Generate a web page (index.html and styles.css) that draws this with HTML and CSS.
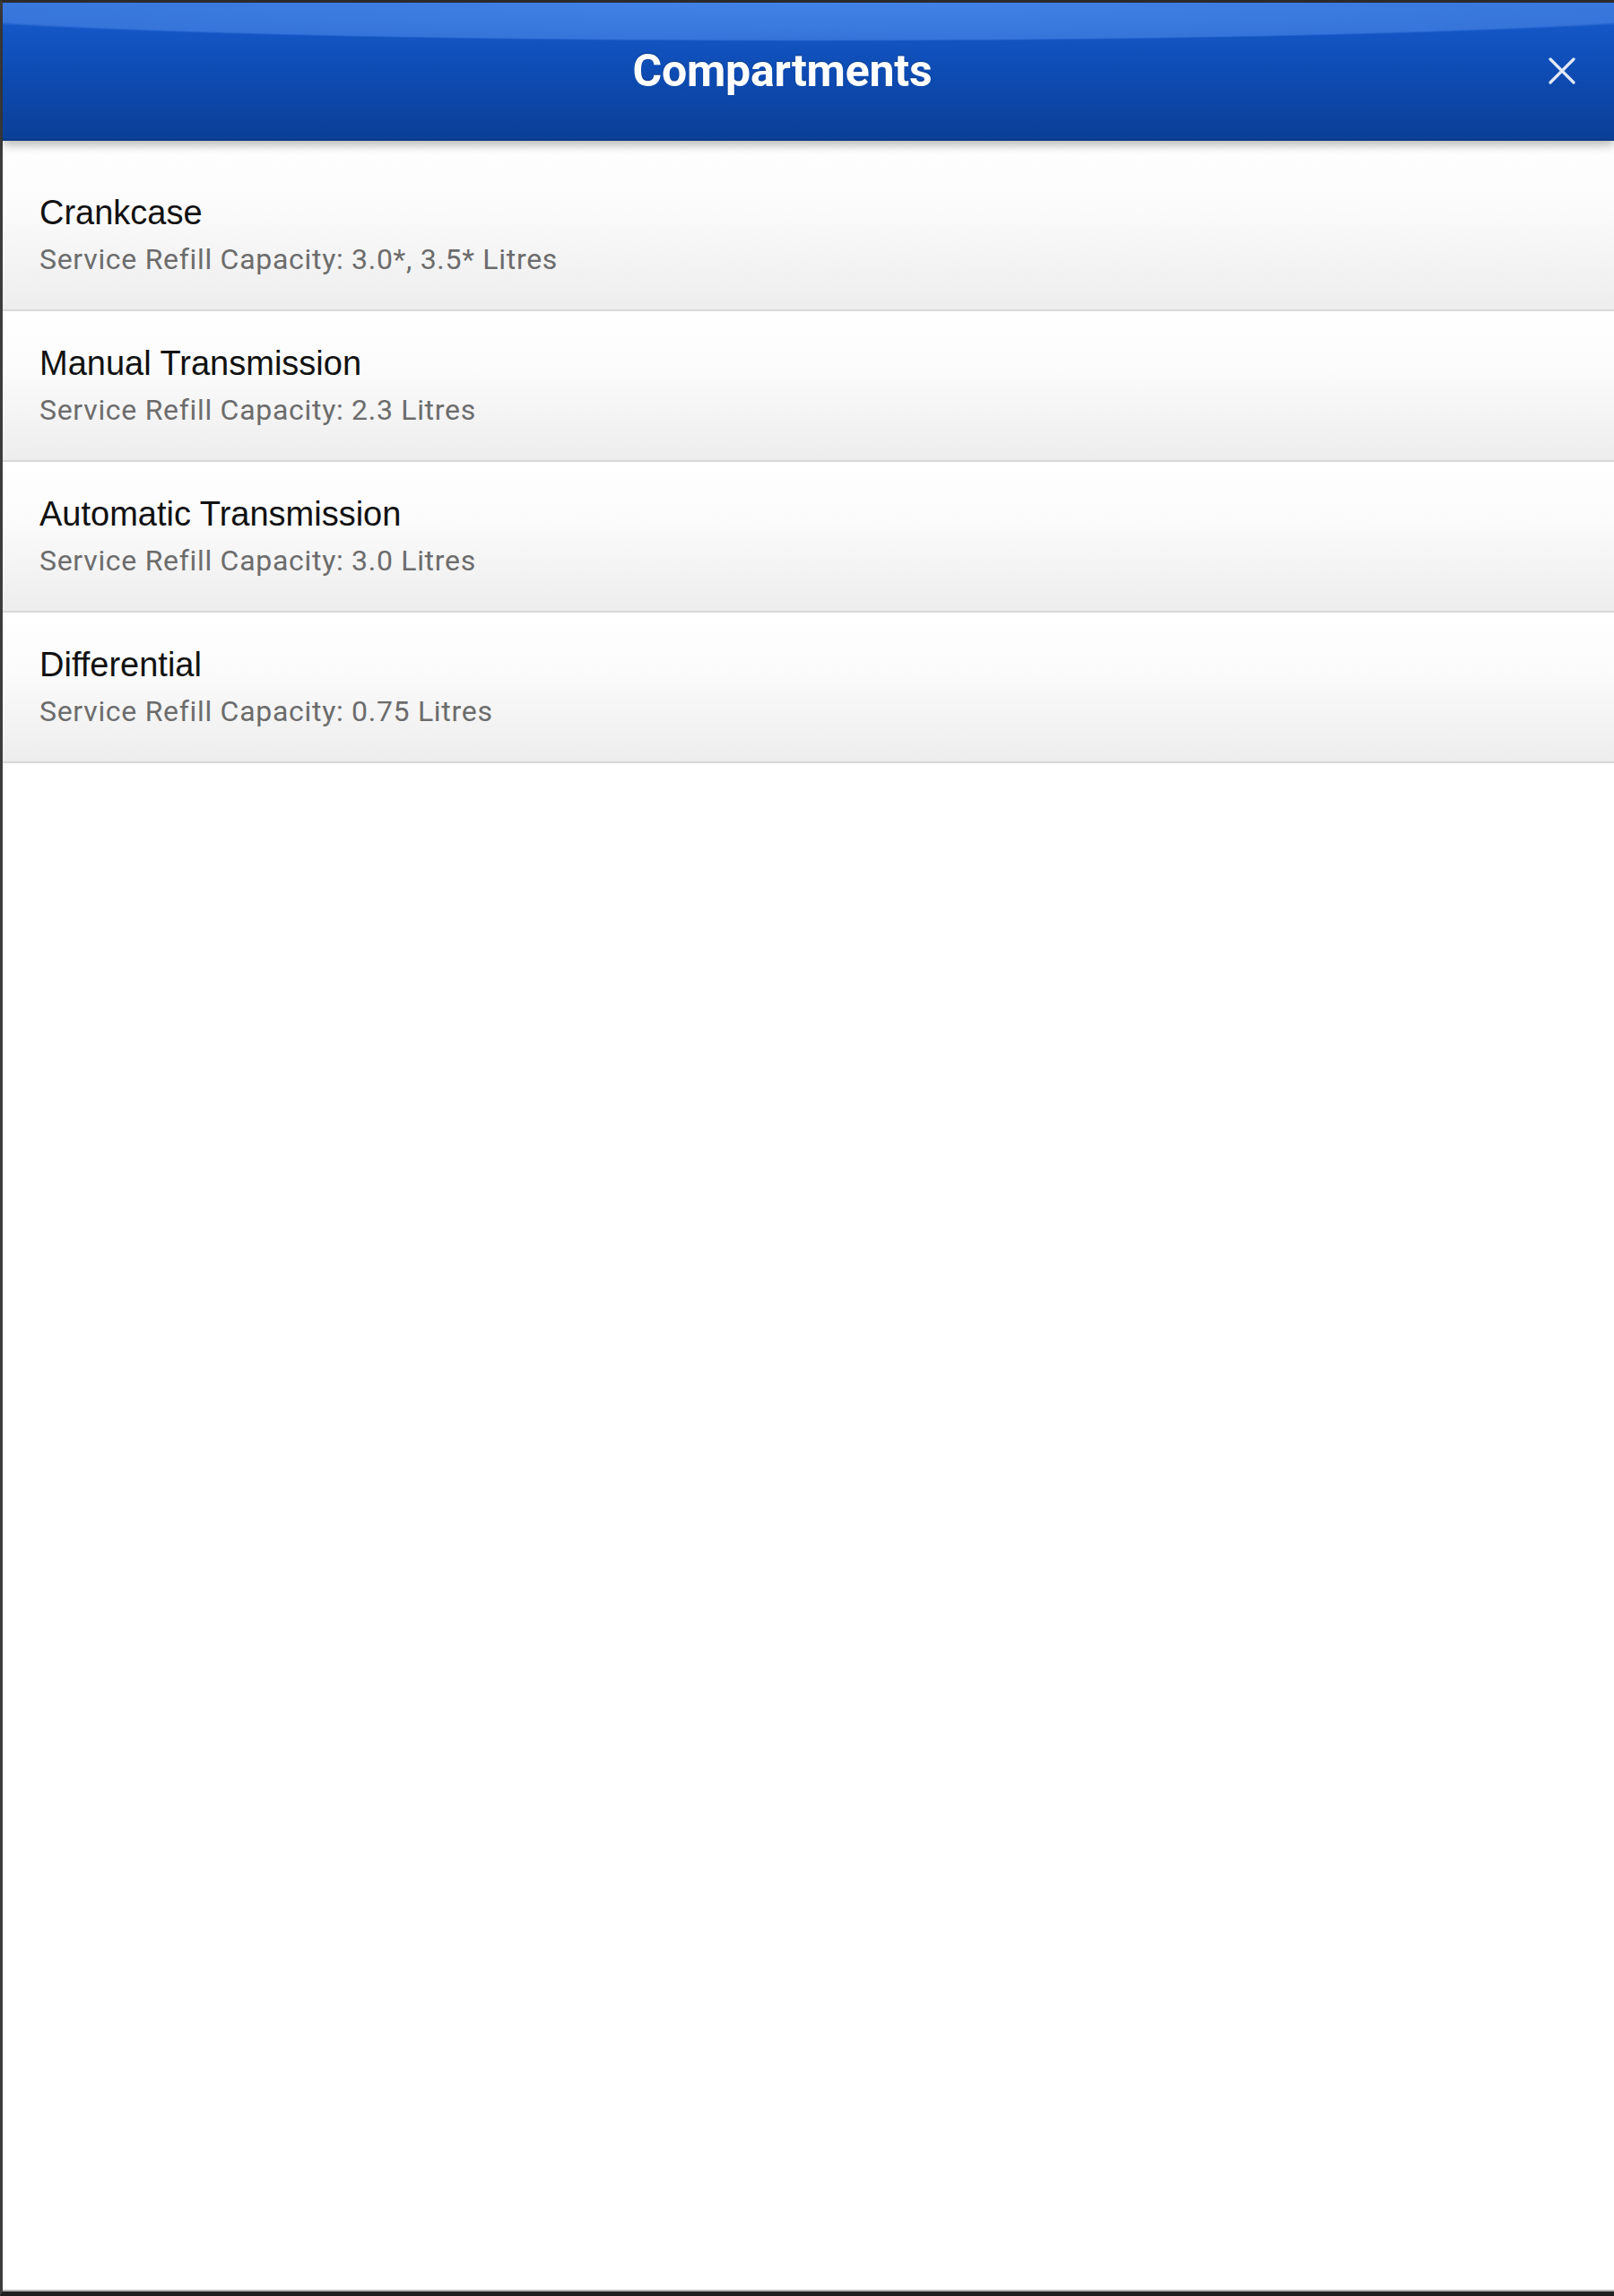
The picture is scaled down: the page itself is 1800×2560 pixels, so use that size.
FILE: index.html
```html
<!DOCTYPE html>
<html lang="en">
  <head>
    <meta charset="UTF-8" />
    <meta name="viewport" content="width=device-width, initial-scale=1.0" />
    <title>Compartments</title>
    <link rel="stylesheet" href="styles.css">
  </head>
  <body>
    <div class="dialog">
      <header class="dialog-header">
        <h1 class="dialog-title">Compartments</h1>
        <button class="close-btn" type="button" aria-label="Close">
          <svg width="30" height="30" viewBox="0 0 30 30">
            <path d="M2 2 L28 28 M28 2 L2 28" stroke="#fff" stroke-width="3.2" stroke-linecap="round" />
          </svg>
        </button>
      </header>

      <ul class="compartment-list">
        <li class="compartment">
          <div class="compartment-name">Crankcase</div>
          <div class="compartment-capacity">Service Refill Capacity: 3.0*, 3.5* Litres</div>
        </li>
        <li class="compartment">
          <div class="compartment-name">Manual Transmission</div>
          <div class="compartment-capacity">Service Refill Capacity: 2.3 Litres</div>
        </li>
        <li class="compartment">
          <div class="compartment-name">Automatic Transmission</div>
          <div class="compartment-capacity">Service Refill Capacity: 3.0 Litres</div>
        </li>
        <li class="compartment">
          <div class="compartment-name">Differential</div>
          <div class="compartment-capacity">Service Refill Capacity: 0.75 Litres</div>
        </li>
      </ul>
    </div>
  </body>
</html>
```

FILE: styles.css
```css
/* General Styles */
body {
  margin: 0;
  padding: 0;
  background: #222;
  font-family: "Liberation Sans", Arial, sans-serif;
}

.dialog {
  height: 2560px;
  box-sizing: border-box;
  background: #fff;
  border-top: 3px solid #2c2c2c;
  border-left: 3px solid #3c3c3c;
  border-bottom: 5px solid #1e1e1e;
  box-shadow: inset 0 -2px 0 #b5b5b5;
}

/* Header */
.dialog-header {
  position: relative;
  z-index: 1;
  display: flex;
  align-items: center;
  height: 152px;
  padding: 0 36px 0 30px;
  border-bottom: 2px solid #0a3884;
  background:
    radial-gradient(ellipse 1100px 43px at 50% 0, #4282e6 0, #3674da 96%, rgba(54, 116, 218, 0) 100%),
    linear-gradient(#175ccf, #0e4cb4 50%, #0b3f97);
  box-shadow: 0 5px 10px rgba(0, 0, 0, 0.28);
}

.dialog-title {
  flex: 1;
  margin: 0;
  text-align: center;
  color: #fff;
  font-family: Roboto, "Liberation Sans", sans-serif;
  font-weight: bold;
  font-size: 50px;
  letter-spacing: -0.2px;
  text-shadow: 0 -1px 1px rgba(0, 0, 0, 0.25);
}

.close-btn {
  width: 60px;
  height: 60px;
  margin-right: -8px;
  padding: 0;
  border: none;
  background: none;
  display: flex;
  align-items: center;
  justify-content: center;
  opacity: 0.88;
  cursor: pointer;
}

/* List */
.compartment-list {
  list-style: none;
  margin: 0;
  padding: 0;
}

.compartment {
  padding: 36px 41px 38px;
  background: linear-gradient(#ffffff, #fbfbfb 40%, #ededed);
  border-bottom: 2px solid #d8d8d8;
}

.compartment:first-child {
  padding-top: 58px;
}

.compartment-name {
  font-size: 38px;
  line-height: 44px;
  color: #111;
}

.compartment-capacity {
  margin-top: 12px;
  font-family: Roboto, "Liberation Sans", sans-serif;
  font-size: 32px;
  line-height: 36px;
  letter-spacing: 0.7px;
  color: #6c6c6c;
}
```
